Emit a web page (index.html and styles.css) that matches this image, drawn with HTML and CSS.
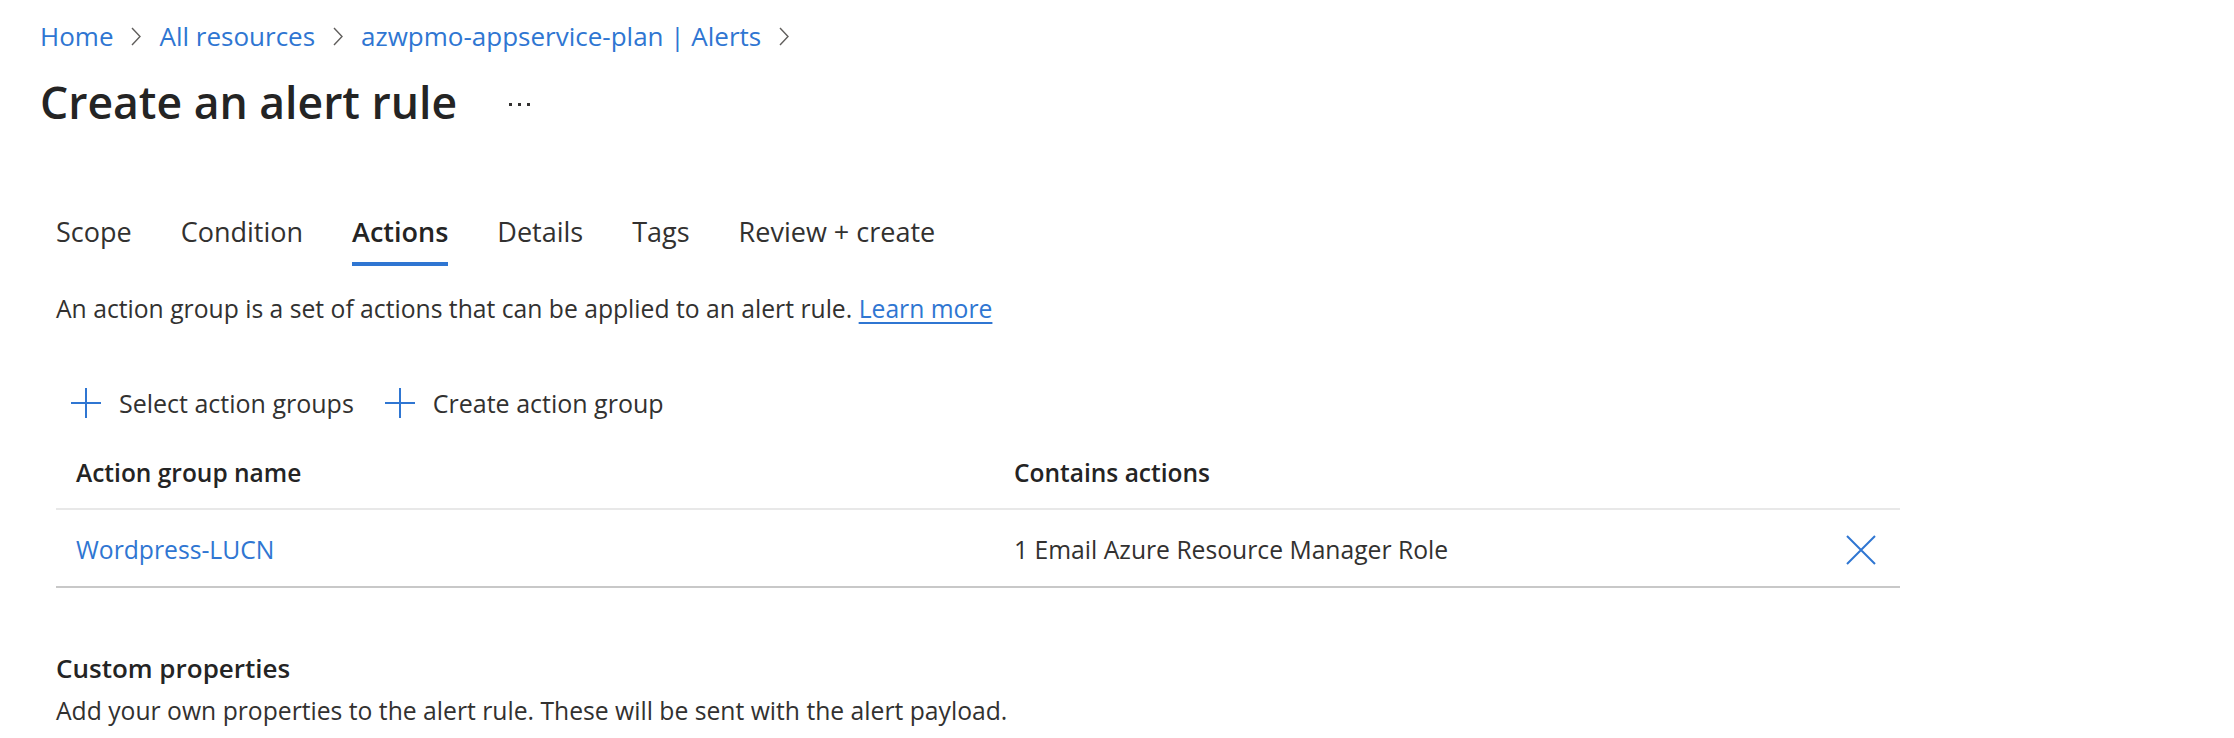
FILE: index.html
```html
<!DOCTYPE html>
<html lang="en">
<head>
<meta charset="utf-8">
<title>Create an alert rule</title>
<link rel="stylesheet" href="styles.css">
</head>
<body>
<div class="page">
  <nav class="breadcrumb">
    <a class="crumb" href="#">Home</a>
    <svg class="chev" viewBox="0 0 10 19" width="10" height="19"><path d="M1 1 L9 9.5 L1 18" fill="none" stroke="#605e5c" stroke-width="1.4"/></svg>
    <a class="crumb" href="#">All resources</a>
    <svg class="chev" viewBox="0 0 10 19" width="10" height="19"><path d="M1 1 L9 9.5 L1 18" fill="none" stroke="#605e5c" stroke-width="1.4"/></svg>
    <a class="crumb" href="#">azwpmo-appservice-plan | Alerts</a>
    <svg class="chev" viewBox="0 0 10 19" width="10" height="19"><path d="M1 1 L9 9.5 L1 18" fill="none" stroke="#605e5c" stroke-width="1.4"/></svg>
  </nav>

  <header class="title-row">
    <h1 class="title">Create an alert rule</h1>
    <span class="more" aria-label="More"><i></i><i></i><i></i></span>
  </header>

  <main class="content">
    <div class="tabs">
      <span class="tab">Scope</span>
      <span class="tab">Condition</span>
      <span class="tab active">Actions</span>
      <span class="tab">Details</span>
      <span class="tab">Tags</span>
      <span class="tab">Review + create</span>
    </div>

    <p class="intro">An action group is a set of actions that can be applied to an alert rule. <a class="link" href="#">Learn more</a></p>

    <div class="toolbar">
      <button class="tool">
        <svg viewBox="0 0 30 30" width="30" height="30"><path d="M15 0 V30 M0 15 H30" stroke="#2f76d2" stroke-width="2" fill="none"/></svg>
        <span>Select action groups</span>
      </button>
      <button class="tool">
        <svg viewBox="0 0 30 30" width="30" height="30"><path d="M15 0 V30 M0 15 H30" stroke="#2f76d2" stroke-width="2" fill="none"/></svg>
        <span>Create action group</span>
      </button>
    </div>

    <div class="table">
      <div class="thead">
        <div class="cell c1">Action group name</div>
        <div class="cell c2">Contains actions</div>
        <div class="cell c3"></div>
      </div>
      <div class="trow">
        <div class="cell c1"><a class="link plain" href="#">Wordpress-LUCN</a></div>
        <div class="cell c2">1 Email Azure Resource Manager Role</div>
        <div class="cell c3">
          <svg viewBox="0 0 30 30" width="30" height="30"><path d="M1 1 L29 29 M29 1 L1 29" stroke="#2f76d2" stroke-width="2" fill="none"/></svg>
        </div>
      </div>
    </div>

    <section class="custom">
      <h2 class="sub">Custom properties</h2>
      <p class="subtext">Add your own properties to the alert rule. These will be sent with the alert payload.</p>
    </section>
  </main>
</div>
</body>
</html>
```

FILE: styles.css
```css
* { box-sizing: border-box; }
html, body { margin: 0; padding: 0; background: #ffffff; }
body {
  font-family: "Segoe UI", "Open Sans", "Noto Sans", sans-serif;
  color: #323130;
  font-size: 24.7px;
}
.page { padding: 18px 0 0 40px; }

.breadcrumb {
  display: flex;
  align-items: center;
  gap: 18px;
  height: 36px;
}
.crumb { color: #2f76d2; text-decoration: none; font-size: 26px; line-height: 36px; }
.chev { display: block; }

.title-row {
  display: flex;
  align-items: center;
  margin-top: 17px;
  height: 62px;
}
.title {
  margin: 0;
  font-size: 44.5px;
  font-weight: 600;
  color: #242424;
  line-height: 62px;
}
.more { display: flex; gap: 6px; margin-left: 52px; margin-top: 4px; }
.more i { width: 3px; height: 3px; background: #323130; display: block; }

.content { padding-left: 16px; padding-right: 334px; margin-top: 81px; }

.tabs { display: flex; gap: 49px; }
.tab {
  font-size: 27px;
  line-height: 36px;
  padding-bottom: 12px;
  border-bottom: 4px solid transparent;
  color: #323130;
}
.tab.active { font-weight: 600; border-bottom-color: #2f76d2; color: #242424; }

.intro { margin: 25px 0 0; line-height: 36px; }
.link { color: #2f76d2; text-decoration: underline; text-underline-offset: 4px; }
.link.plain { text-decoration: none; }

.toolbar { display: flex; gap: 31px; margin-top: 58px; padding-left: 15px; }
.tool {
  display: flex;
  align-items: center;
  gap: 18px;
  background: none;
  border: 0;
  padding: 0;
  font: inherit;
  color: #323130;
  font-size: 25px;
  line-height: 36px;
}
.tool svg { display: block; }

.table { margin-top: 34px; }
.thead, .trow { display: flex; align-items: center; }
.thead {
  padding-bottom: 17px;
  border-bottom: 2px solid #e8e8e8;
  font-weight: 600;
  font-size: 24.5px;
  color: #242424;
}
.trow { padding: 22px 0 18px; border-bottom: 2px solid #c8c8c8; }
.cell { line-height: 36px; }
.c1 { width: 958px; padding-left: 20px; }
.c2 { flex: 1; }
.c3 { width: 54px; height: 36px; display: flex; align-items: center; justify-content: flex-start; }
.c3 svg { display: block; }

.custom { margin-top: 62px; }
.sub { margin: 0; font-size: 26px; font-weight: 600; line-height: 36px; color: #242424; }
.subtext { margin: 7px 0 0; line-height: 36px; }
```
